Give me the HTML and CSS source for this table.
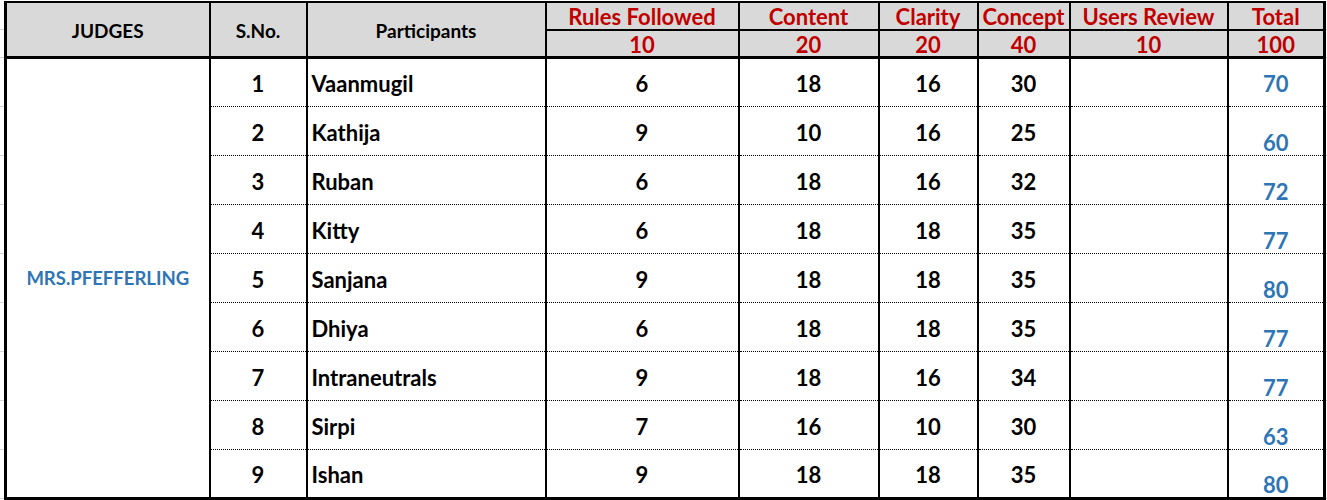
FILE: index.html
```html
<!DOCTYPE html>
<html>
<head>
<meta charset="utf-8">
<link rel="stylesheet" href="styles.css">
</head>
<body>
<table class="sheet">
  <colgroup>
    <col class="c-judge"><col class="c-sno"><col class="c-name"><col class="c-rules"><col class="c-content"><col class="c-clarity"><col class="c-concept"><col class="c-users"><col class="c-total">
  </colgroup>
  <thead>
    <tr class="h1">
      <th rowspan="2" class="hd">JUDGES</th>
      <th rowspan="2" class="hd">S.No.</th>
      <th rowspan="2" class="hd">Participants</th>
      <th class="red">Rules Followed</th>
      <th class="red">Content</th>
      <th class="red">Clarity</th>
      <th class="red">Concept</th>
      <th class="red">Users Review</th>
      <th class="red">Total</th>
    </tr>
    <tr class="h2">
      <th class="red">10</th>
      <th class="red">20</th>
      <th class="red">20</th>
      <th class="red">40</th>
      <th class="red">10</th>
      <th class="red">100</th>
    </tr>
  </thead>
  <tbody>
    <tr class="first">
      <td rowspan="9" class="judge">MRS.PFEFFERLING</td>
      <td class="num">1</td><td class="name">Vaanmugil</td><td class="num">6</td><td class="num">18</td><td class="num">16</td><td class="num">30</td><td></td><td class="total mid">70</td>
    </tr>
    <tr><td class="num">2</td><td class="name">Kathija</td><td class="num">9</td><td class="num">10</td><td class="num">16</td><td class="num">25</td><td></td><td class="total">60</td></tr>
    <tr><td class="num">3</td><td class="name">Ruban</td><td class="num">6</td><td class="num">18</td><td class="num">16</td><td class="num">32</td><td></td><td class="total">72</td></tr>
    <tr><td class="num">4</td><td class="name">Kitty</td><td class="num">6</td><td class="num">18</td><td class="num">18</td><td class="num">35</td><td></td><td class="total">77</td></tr>
    <tr><td class="num">5</td><td class="name">Sanjana</td><td class="num">9</td><td class="num">18</td><td class="num">18</td><td class="num">35</td><td></td><td class="total">80</td></tr>
    <tr><td class="num">6</td><td class="name">Dhiya</td><td class="num">6</td><td class="num">18</td><td class="num">18</td><td class="num">35</td><td></td><td class="total">77</td></tr>
    <tr><td class="num">7</td><td class="name">Intraneutrals</td><td class="num">9</td><td class="num">18</td><td class="num">16</td><td class="num">34</td><td></td><td class="total">77</td></tr>
    <tr><td class="num">8</td><td class="name">Sirpi</td><td class="num">7</td><td class="num">16</td><td class="num">10</td><td class="num">30</td><td></td><td class="total">63</td></tr>
    <tr class="last"><td class="num">9</td><td class="name">Ishan</td><td class="num">9</td><td class="num">18</td><td class="num">18</td><td class="num">35</td><td></td><td class="total">80</td></tr>
  </tbody>
</table>
</body>
</html>
```
FILE: styles.css
```css
html {
  height: 100%;
  background-color: #ffffff;
  background-image:
    linear-gradient(#d4d4d4, #d4d4d4),
    repeating-linear-gradient(to bottom, #d4d4d4 0 1px, transparent 1px 49px);
  background-position: 0 29px, 0 57px;
  background-size: 100% 1px, 100% 100%;
  background-repeat: no-repeat;
}

body {
  margin: 0;
  padding: 1px 0 0 4px;
  font-family: Lato, "Open Sans", sans-serif;
  font-weight: 700;
  color: #000;
}

.sheet {
  border-collapse: collapse;
  table-layout: fixed;
  width: 1321px;
  background: #fff;
  border: 3px solid #000;
  border-top-width: 2px;
}

.c-judge { width: 204px; }
.c-sno { width: 97px; }
.c-name { width: 239px; }
.c-rules { width: 193px; }
.c-content { width: 140px; }
.c-clarity { width: 99px; }
.c-concept { width: 92px; }
.c-users { width: 158px; }
.c-total { width: 97px; }

th {
  background: #d9d9d9;
  border: 2px solid #000;
  padding: 0;
  text-align: center;
  vertical-align: middle;
  line-height: 1;
  font-weight: 700;
}

.h1 { height: 28px; }
.h2 { height: 27px; }
.h2 th { border-bottom-width: 3px; }
.h1 th.hd { border-bottom-width: 3px; padding-top: 2px; }

.hd {
  font-size: 19px;
  color: #000;
}

.red {
  font-size: 22px;
  color: #c00000;
}

.h1 .red { vertical-align: middle; padding-top: 1px; }
.h2 .red { vertical-align: middle; padding-top: 3px; }

tbody tr { height: 49px; }

td {
  border-left: 2px solid #000;
  border-right: 2px solid #000;
  border-top: 1px dotted #000;
  border-bottom: 1px dotted #000;
  padding: 3px 4px 0;
  font-size: 22px;
  line-height: 1;
  vertical-align: middle;
}

.first td { border-top: 3px solid #000; }
.last td { border-bottom: 3px solid #000; }

.judge {
  text-align: center;
  color: #2e75b6;
  font-size: 18.5px;
  padding-top: 0;
  border-bottom: 3px solid #000;
}

.num { text-align: center; }
.name { text-align: left; }

.total {
  text-align: center;
  color: #2e75b6;
  vertical-align: bottom;
  padding-top: 0;
  padding-bottom: 1px;
}

.total.mid { vertical-align: middle; padding-top: 3px; padding-bottom: 0; }
```
